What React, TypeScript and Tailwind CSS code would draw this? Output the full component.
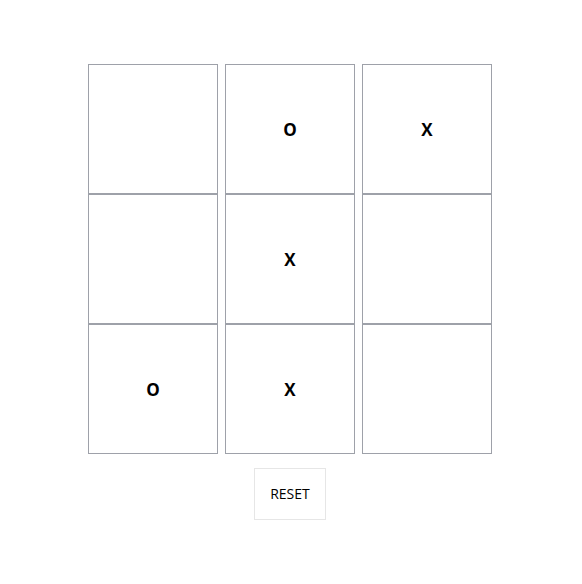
const board = ['', 'O', 'X', '', 'X', '', 'O', 'X', ''];

export default function App() {
  return (
    <div className="w-[582px] h-[584px] bg-white pt-[64px] pl-[88px]" style={{ fontFamily: '"Open Sans", sans-serif' }}>
      <div className="grid grid-cols-[130px_130px_130px] gap-x-[7px] w-[404px]">
        {board.map((v, i) => (
          <div
            key={i}
            className="w-[130px] h-[130px] border border-[#9ea1a9] flex items-center justify-center pt-[1px] text-[17px] font-bold text-black"
          >
            {v}
          </div>
        ))}
      </div>
      <div className="w-[404px] flex justify-center mt-[14px]">
        <button className="w-[72px] h-[52px] border border-[#e6e6e6] bg-white pb-[2px] text-[14px] text-black">
          RESET
        </button>
      </div>
    </div>
  );
}
